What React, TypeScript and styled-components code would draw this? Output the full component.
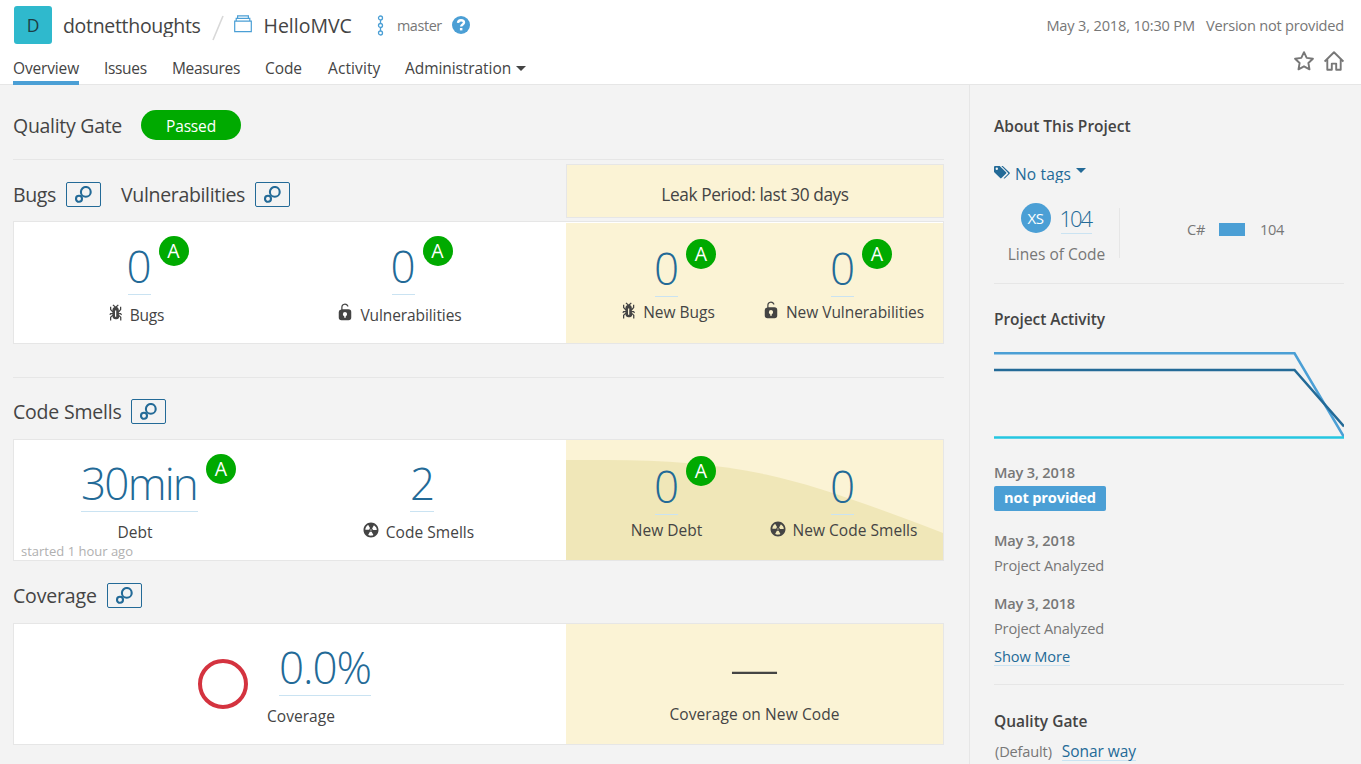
import React from "react";
import styled, { createGlobalStyle } from "styled-components";

const color = {
  text: "#444444",
  muted: "#777777",
  link: "#236a97",
  linkLine: "#cae3f2",
  blue: "#4b9fd5",
  green: "#00aa00",
  red: "#d4333f",
  page: "#f3f3f3",
  border: "#e6e6e6",
  leak: "#fbf3d5",
  leakWave: "#f0e7b8",
};

const GlobalStyle = createGlobalStyle`
  * { box-sizing: border-box; }
  body {
    margin: 0;
    height: 764px;
    overflow: hidden;
    background: ${color.page};
    color: ${color.text};
    font: 15.5px/24px "Open Sans", "Noto Sans", sans-serif;
    white-space: nowrap;
  }
  svg { display: block; flex: none; }
`;

const Tracked = styled.span<{ $ls?: number }>`
  letter-spacing: ${(p) => p.$ls ?? 0}px;
`;

/* ---------- header ---------- */

const Header = styled.header`
  height: 85px;
  background: #fff;
  border-bottom: 1px solid ${color.border};
  padding: 6px 17px 0 13px;
`;

const HeaderRow = styled.div`
  display: flex;
  align-items: center;
  height: 38px;
`;

const Avatar = styled.div`
  width: 38px;
  height: 38px;
  margin: 0 11px 0 1px;
  border-radius: 3px;
  background: #2fb9cd;
  color: #1d3d44;
  font-size: 17.5px;
  line-height: 38px;
  text-align: center;
`;

const Crumb = styled(Tracked)`
  height: 24px;
  overflow: hidden;
  font-size: 19.5px;
  line-height: 26px;
`;

const Slash = styled.svg`
  margin: 6px 10px 0 11px;
`;

const ProjectIcon = styled.svg`
  margin: -2px 12px 0 0;
`;

const BranchIcon = styled.svg`
  margin: 0 13px 0 25px;
`;

const Branch = styled(Tracked)`
  width: 45px;
  margin: 2px 10px 0 0;
  color: ${color.muted};
  font-size: 14.4px;
`;

const Meta = styled.div`
  display: flex;
  gap: 11px;
  margin-left: auto;
  color: ${color.muted};
  font-size: 14.6px;
`;

const NavRow = styled.nav`
  display: flex;
  height: 41px;
  gap: 25px;
  padding-top: 11px;
`;

const Tab = styled.a<{ $active?: boolean; $ls: number; $w: number }>`
  display: flex;
  width: ${(p) => p.$w}px;
  height: 30px;
  line-height: 26px;
  letter-spacing: ${(p) => p.$ls}px;
  border-bottom: 4px solid ${(p) => (p.$active ? color.blue : "transparent")};
`;

const Caret = styled.i<{ $color: string; $top: number; $left: number }>`
  width: 0;
  height: 0;
  margin: ${(p) => p.$top}px 0 0 ${(p) => p.$left}px;
  border: 5px solid transparent;
  border-top-color: ${(p) => p.$color};
  border-bottom: 0;
`;

const NavActions = styled.div`
  display: flex;
  gap: 10px;
  margin: -4px 0 0 auto;
`;

/* ---------- main column ---------- */

const Columns = styled.div`
  display: flex;
  height: 679px;
`;

const Main = styled.main`
  width: 969px;
  padding: 0 25px 0 13px;
`;

const GateRow = styled.section`
  display: flex;
  align-items: center;
  height: 75px;
  padding-top: 5px;
  border-bottom: 1px solid ${color.border};
`;

const Title = styled.h2<{ $w: number; $ls: number }>`
  width: ${(p) => p.$w}px;
  margin: 0;
  font-size: 19.5px;
  font-weight: 400;
  line-height: 26px;
  letter-spacing: ${(p) => p.$ls}px;
`;

const GateTitle = styled(Title)`
  margin-top: 2px;
`;

const Pill = styled.span`
  width: 100px;
  height: 30px;
  margin-left: 19px;
  border-radius: 15px;
  background: ${color.green};
  color: #fff;
  line-height: 32px;
  letter-spacing: -0.15px;
  text-align: center;
`;

const DomainHeader = styled.div<{ $height: number; $top?: number }>`
  display: flex;
  align-items: center;
  height: ${(p) => p.$height}px;
  padding-top: ${(p) => p.$top ?? 0}px;
`;

const DetailsButton = styled.button`
  display: flex;
  align-items: center;
  justify-content: center;
  width: 35px;
  height: 25px;
  margin: 0 20px 0 10px;
  padding: 0;
  border: 1px solid ${color.link};
  border-radius: 2px;
  background: transparent;
`;

const LeakLegend = styled.div`
  width: 378px;
  height: 54px;
  margin: 0 0 4px auto;
  align-self: flex-end;
  border: 1px solid ${color.border};
  background: ${color.leak};
  font-size: 17.3px;
  line-height: 60px;
  letter-spacing: -0.41px;
  text-align: center;
`;

const LegendHeader = styled.div`
  display: flex;
  align-items: center;
  height: 61px;
  > h2, > button { transform: translateY(4px); }
  > div { margin: 0 0 3px auto; }
`;

const Card = styled.section<{ $height: number }>`
  display: flex;
  height: ${(p) => p.$height}px;
  border: 1px solid ${color.border};
  background: #fff;
`;

const Measures = styled.div<{ $columns: string; $gap?: number }>`
  position: relative;
  display: grid;
  grid-template-columns: ${(p) => p.$columns};
  column-gap: ${(p) => p.$gap ?? 0}px;
  width: 552px;
`;

const LeakMeasures = styled.div<{ $columns: string; $top?: number }>`
  position: relative;
  display: grid;
  grid-template-columns: ${(p) => p.$columns};
  width: 377px;
  margin-top: ${(p) => p.$top ?? 0}px;
  background: ${color.leak};
`;

const Wave = styled.svg`
  position: absolute;
  left: 0;
  top: 0;
`;

const Cell = styled.div<{ $top: number }>`
  position: relative;
  display: flex;
  flex-direction: column;
  align-items: center;
  min-width: 0;
  padding-top: ${(p) => p.$top}px;
`;

const Value = styled.a<{ $ls: number; $w: number; $shift?: number; $indent?: number }>`
  position: relative;
  width: ${(p) => p.$w}px;
  height: 59px;
  margin-left: ${(p) => p.$shift ?? 0}px;
  border-bottom: 1px solid ${color.linkLine};
  color: ${color.link};
  font-size: 44px;
  font-weight: 300;
  line-height: 61px;
  letter-spacing: ${(p) => p.$ls}px;
  text-indent: ${(p) => p.$indent ?? 0}px;
`;

const Rating = styled.span<{ $top: number }>`
  position: absolute;
  left: calc(100% + 8px);
  top: ${(p) => p.$top}px;
  width: 30px;
  height: 30px;
  border-radius: 50%;
  background: ${color.green};
  color: #fff;
  font-size: 19.5px;
  font-weight: 400;
  line-height: 30px;
  letter-spacing: 0;
  text-align: center;
  text-indent: 0;
`;

const Label = styled.div<{ $top: number; $ls?: number; $icon?: number }>`
  display: flex;
  gap: 5px;
  margin-top: ${(p) => p.$top}px;
  letter-spacing: ${(p) => p.$ls ?? 0}px;
  svg { margin-top: ${(p) => p.$icon ?? 0}px; }
`;

const Started = styled.span`
  position: absolute;
  left: 7px;
  bottom: -1px;
  color: #b0b0b0;
  font-size: 13px;
  line-height: 20px;
`;

const Divider = styled.hr<{ $top: number }>`
  height: 1px;
  margin: ${(p) => p.$top}px 0 0;
  border: 0;
  background: ${color.border};
`;

const CoverageSummary = styled.div`
  display: flex;
  gap: 19px;
  width: 552px;
  padding: 13px 0 0 184px;
`;

const Ring = styled.div`
  width: 50px;
  height: 50px;
  margin-top: 22px;
  border: 4px solid ${color.red};
  border-radius: 50%;
`;

const Dash = styled.span`
  height: 58px;
  font-size: 49px;
  font-weight: 300;
  line-height: 54px;
`;

/* ---------- sidebar ---------- */

const Sidebar = styled.aside`
  width: 392px;
  padding: 0 17px 0 24px;
  border-left: 1px solid ${color.border};
  color: ${color.muted};
  font-size: 14.6px;
`;

const SideTitle = styled.h3<{ $top: number; $ls?: number }>`
  margin: ${(p) => p.$top}px 0 0;
  color: ${color.text};
  font-size: 15.5px;
  font-weight: 600;
  letter-spacing: ${(p) => p.$ls ?? 0}px;
`;

const Tags = styled.a`
  display: flex;
  height: 21px;
  margin-top: 24px;
  overflow: hidden;
  color: ${color.link};
  font-size: 15.5px;
  svg { margin: 1px 4px 0 0; }
`;

const SizeRow = styled.div`
  display: flex;
  height: 50px;
  margin-top: 25px;
`;

const Size = styled.div`
  display: flex;
  flex-direction: column;
  align-items: center;
  width: 125px;
  margin-top: -5px;
  font-size: 15.5px;
`;

const SizeTop = styled.div`
  display: flex;
  gap: 10px;
  height: 31px;
  margin-right: 1px;
`;

const SizeBadge = styled.span`
  width: 30px;
  height: 30px;
  border-radius: 50%;
  background: ${color.blue};
  color: #fff;
  font-size: 15px;
  line-height: 31px;
  letter-spacing: -0.4px;
  text-align: center;
`;

const SizeValue = styled.a`
  width: 31px;
  height: 31px;
  border-bottom: 1px solid ${color.linkLine};
  color: ${color.link};
  font-size: 22px;
  font-weight: 300;
  line-height: 31px;
  letter-spacing: -2.1px;
  text-indent: -1px;
`;

const SizeLabel = styled.span`
  margin-top: 8px;
`;

const Languages = styled.div`
  display: flex;
  align-items: center;
  height: 50px;
  padding: 0 0 8px 67px;
  border-left: 1px solid ${color.border};
  letter-spacing: -0.3px;
`;

const LanguageBar = styled.span`
  width: 26px;
  height: 13px;
  margin: 1px 15px 0 14px;
  background: ${color.blue};
`;

const Chart = styled.svg`
  margin-top: 20px;
`;

const ActivityDate = styled.div<{ $top: number }>`
  margin-top: ${(p) => p.$top}px;
  font-weight: 600;
  letter-spacing: -0.18px;
`;

const VersionBadge = styled.span`
  display: block;
  width: 112px;
  height: 25px;
  margin-top: 2px;
  border-radius: 2px;
  background: ${color.blue};
  color: #fff;
  font-weight: 700;
  line-height: 23px;
  letter-spacing: -0.13px;
  text-align: center;
`;

const ActivityText = styled.div`
  margin-top: 1px;
  letter-spacing: -0.17px;
`;

const Link = styled.a<{ $ls: number; $size?: number }>`
  display: block;
  width: fit-content;
  height: 21px;
  border-bottom: 1px solid ${color.linkLine};
  color: ${color.link};
  font-size: ${(p) => p.$size ?? 14.6}px;
  line-height: 22px;
  letter-spacing: ${(p) => p.$ls}px;
`;

const ShowMore = styled(Link)`
  margin-top: 5px;
`;

const GateName = styled.div`
  display: flex;
  gap: 10px;
  margin-top: 7px;
  padding-left: 1px;
  line-height: 22px;
  letter-spacing: -0.16px;
`;

/* ---------- icons ---------- */

const iconPaths = {
  bug: "M11 9h1.3l.5.8.8-.5-.8-1.3H11v-.3l2-2.3V3h-1v2l-1 1.2V5c-.1-.8-.7-1.5-1.4-1.9L11 1.8l-.7-.7-1.8 1.6-1.8-1.6-.7.7 1.5 1.3C6.7 3.5 6.1 4.2 6 5v1.1L5 5V3H4v2.3l2 2.3V8H4.2l-.7 1.2.8.5.4-.7H6v.3l-2 1.9V14h1v-2.4l1-1C6 12 7.1 13 8.4 13h.8c.7 0 1.4-.3 1.8-.9.3-.4.3-.9.2-1.4l.9.9V14h1v-2.8l-2-1.9V9zm-2 2H8V6h1v5z",
  lock: "M10.8 5H6V3.9a2.28 2.28 0 0 1 2-2.5 2.22 2.22 0 0 1 1.8 1.2.48.48 0 0 0 .7.2.48.48 0 0 0 .2-.7A3 3 0 0 0 8 .4a3.34 3.34 0 0 0-3 3.5v1.2a2.16 2.16 0 0 0-2 2.1v4.4a2.22 2.22 0 0 0 2.2 2.2h5.6a2.22 2.22 0 0 0 2.2-2.2V7.2A2.22 2.22 0 0 0 10.8 5zm-2.2 5.5v1.2H7.4v-1.2a1.66 1.66 0 0 1-1.1-1.6A1.75 1.75 0 0 1 8 7.2a1.71 1.71 0 0 1 .6 3.3z",
  smell:
    "M8 2C4.7 2 2 4.7 2 8s2.7 6 6 6 6-2.7 6-6-2.7-6-6-6zm-.5 5.5h.9v.9h-.9v-.9zm-3.8.2c-.1 0-.2-.1-.2-.2 0-.4.1-1.2.6-2S5.3 4.2 5.6 4c.2 0 .3 0 .3.1l1.3 2.3c0 .1 0 .2-.1.2-.1.2-.2.3-.3.5-.1.2-.2.4-.2.5 0 .1-.1.2-.2.2l-2.7-.1zM9.9 12c-.3.2-1.1.5-2 .5-.9 0-1.7-.3-2-.5-.1 0-.1-.2-.1-.3l1.3-2.3c0-.1.1-.1.2-.1.2.1.3.1.5.1s.4 0 .5-.1c.1 0 .2 0 .2.1l1.3 2.3c.2.2.2.3.1.3zm2.5-4.1L9.7 8c-.1 0-.2-.1-.2-.2 0-.2-.1-.4-.2-.5 0-.1-.2-.3-.3-.4-.1 0-.1-.1-.1-.2l1.3-2.3c.1-.1.2-.1.3-.1.3.2 1 .7 1.5 1.5s.6 1.6.6 2c0 0-.1.1-.2.1z",
};

const MetricIcon = ({ name }: { name: keyof typeof iconPaths }) => (
  <svg width="20" height="20" viewBox="0 0 16 16" fill={color.text}>
    <path d={iconPaths[name]} />
  </svg>
);

const Details = () => (
  <DetailsButton>
    <svg width="17" height="17" viewBox="0 0 17 17" fill="none" stroke={color.link} strokeWidth="2.1">
      <circle cx="10.8" cy="5.9" r="4.9" />
      <circle cx="4" cy="12.800" r="3" />
    </svg>
  </DetailsButton>
);

/* ---------- composed parts ---------- */

type MeasureProps = {
  value: string;
  width: number;
  ls: number;
  label: string;
  labelLs?: number;
  icon?: keyof typeof iconPaths;
  rated?: boolean;
  ratingTop?: number;
  top: number;
  leak?: boolean;
  children?: React.ReactNode;
};

const Measure = ({ value, width, ls, label, labelLs, icon, rated, ratingTop = 0, top, leak, children }: MeasureProps) => (
  <Cell $top={top}>
    <Value $ls={ls} $w={width} $shift={leak ? 0 : 9} $indent={value === "0" ? -1 : 0}>
      {value}
      {rated && <Rating $top={ratingTop}>A</Rating>}
    </Value>
    <Label $top={leak ? 3 : 8} $ls={labelLs} $icon={leak ? 1 : 0}>
      {icon && <MetricIcon name={icon} />}
      {label}
    </Label>
    {children}
  </Cell>
);

export default function App() {
  return (
    <>
      <GlobalStyle />
      <Header>
        <HeaderRow>
          <Avatar>D</Avatar>
          <Crumb $ls={-0.31}>dotnetthoughts</Crumb>
          <Slash width="12" height="26" viewBox="0 0 12 26" stroke="#d8d8d8" strokeWidth="1.6">
            <path d="M1 25L11 1" />
          </Slash>
          <ProjectIcon width="18" height="18" viewBox="0 0 18 18" fill="none" stroke={color.blue} strokeWidth="1.2">
            <path d="M.7 6.2h16.6v10.4H.7zM2.2 6V3.4h13.6V6M3.6 3.2V.8h10.8v2.4" />
          </ProjectIcon>
          <Crumb $ls={0}>HelloMVC</Crumb>
          <BranchIcon width="7" height="21" viewBox="0 0 7 21" fill="none" stroke={color.blue} strokeWidth="1.3">
            <circle cx="3.5" cy="3" r="2" />
            <circle cx="3.5" cy="10.5" r="2" />
            <circle cx="3.5" cy="18" r="2" />
            <path d="M3.5 5v3.500M3.500 12.500v3.500" />
          </BranchIcon>
          <Branch $ls={-0.39}>master</Branch>
          <svg width="18" height="18" viewBox="0 0 18 18" fill="none">
            <circle cx="9" cy="9" r="9" fill={color.blue} />
            <path d="M6 6.900C6.100 5.100 7.300 4.200 9 4.200c1.800 0 3 1 3 2.400 0 2-2.800 1.900-2.800 4" stroke="#fff" strokeWidth="2.400" />
            <path d="M7.900 12h2.500v2.400H7.900z" fill="#fff" />
          </svg>
          <Meta>
            <Tracked $ls={-0.17}>May 3, 2018, 10:30 PM</Tracked>
            <Tracked $ls={-0.22}>Version not provided</Tracked>
          </Meta>
        </HeaderRow>
        <NavRow>
          <Tab $active $w={66} $ls={-0.15}>Overview</Tab>
          <Tab $w={43} $ls={-0.33}>Issues</Tab>
          <Tab $w={68} $ls={-0.33}>Measures</Tab>
          <Tab $w={38} $ls={-0.08}>Code</Tab>
          <Tab $w={52} $ls={0.1}>Activity</Tab>
          <Tab $w={120} $ls={-0.07}>
            Administration
            <Caret $color={color.text} $top={11} $left={5} />
          </Tab>
          <NavActions>
            <svg width="20" height="20" viewBox="0 0 20 20" fill="none" stroke={color.muted} strokeWidth="1.9" strokeLinejoin="round">
              <path d="M10 1.200l2.700 5.700 6.200.8-4.500 4.300 1.100 6.300-5.500-3-5.500 3 1.100-6.300L1.100 7.700l6.200-.8z" />
            </svg>
            <svg width="20" height="20" viewBox="0 0 20 20" fill="none" stroke={color.muted} strokeWidth="1.900" strokeLinejoin="round">
              <path d="M.6 10.600L10 1.300l9.400 9.300M3.300 8.600v10.200h4.500v-6.200h4.400v6.200h4.500V8.600" />
            </svg>
          </NavActions>
        </NavRow>
      </Header>

      <Columns>
        <Main>
          <GateRow>
            <GateTitle $w={109} $ls={-0.29}>Quality Gate</GateTitle>
            <Pill>Passed</Pill>
          </GateRow>

          <LegendHeader>
            <Title $w={43} $ls={-0.36}>Bugs</Title>
            <Details />
            <Title $w={124} $ls={-0.33}>Vulnerabilities</Title>
            <Details />
            <LeakLegend>Leak Period: last 30 days</LeakLegend>
          </LegendHeader>
          <Card $height={123}>
            <Measures $columns="241px 287px">
              <Measure top={14} value="0" width={23} ls={-2} icon="bug" label="Bugs" labelLs={-0.2} rated />
              <Measure top={14} value="0" width={23} ls={-2} icon="lock" label="Vulnerabilities" labelLs={-0.1} rated />
            </Measures>
            <LeakMeasures $columns="201px 151px" $top={1}>
              <Measure leak top={15} value="0" width={23} ls={-2} icon="bug" label="New Bugs" rated ratingTop={1} />
              <Measure leak top={15} value="0" width={23} ls={-2} icon="lock" label="New Vulnerabilities" labelLs={-0.05} rated ratingTop={1} />
            </LeakMeasures>
          </Card>
          <Divider $top={33} />

          <DomainHeader $height={61} $top={6}>
            <Title $w={108} $ls={-0.2}>Code Smells</Title>
            <Details />
          </DomainHeader>
          <Card $height={122}>
            <Measures $columns="242px 297px" $gap={13}>
              <Measure top={13} value="30min" width={117} ls={-1.8} label="Debt" rated ratingTop={1}>
                <Started>started 1 hour ago</Started>
              </Measure>
              <Measure top={13} value="2" width={24} ls={-1} icon="smell" label="Code Smells" labelLs={0.03} />
            </Measures>
            <LeakMeasures $columns="201px 151px">
              <Wave width="377" height="120" viewBox="0 0 377 120" fill={color.leakWave}>
                <path d="M0 20H40C100 20 150 24 200 34.500S320 71 377 93V120H0z" />
              </Wave>
              <Measure leak top={16} value="0" width={23} ls={-2} label="New Debt" rated />
              <Measure leak top={16} value="0" width={23} ls={-2} icon="smell" label="New Code Smells" labelLs={0.03} />
            </LeakMeasures>
          </Card>

          <DomainHeader $height={62} $top={7}>
            <Title $w={84} $ls={-0.16}>Coverage</Title>
            <Details />
          </DomainHeader>
          <Card $height={122}>
            <CoverageSummary>
              <Ring />
              <div>
                <Value as="div" $w={92} $shift={12} $ls={-1.05}>0.0%</Value>
                <Label $top={8} $ls={0.05}>Coverage</Label>
              </div>
            </CoverageSummary>
            <LeakMeasures $columns="377px">
              <Cell $top={16}>
                <Dash>—</Dash>
                <Label $top={4} $ls={0.1}>Coverage on New Code</Label>
              </Cell>
            </LeakMeasures>
          </Card>
        </Main>

        <Sidebar>
          <SideTitle $top={29}>About This Project</SideTitle>
          <Tags>
            <svg width="17" height="17" viewBox="0 0 17 17" fill={color.link}>
              <path fillRule="evenodd" d="M0 4.500V9l6.200 6.100c.4.400.9.400 1.300 0l4.600-4.500c.4-.4.400-.9 0-1.300L5.700 3H1C.4 3 0 3.500 0 4.500zM2.800 4.500a1.200 1.200 0 1 1 0 2.400 1.200 1.200 0 0 1 0-2.400z" />
              <path d="M7.300 3h1.500l6.800 6.400c.4.400.4.900 0 1.300L11 15.200c-.5.500-.9.400-1.400 0l4.300-4.100c.5-.5.500-1 0-1.400z" />
            </svg>
            <Tracked $ls={0.15}>No tags</Tracked>
            <Caret $color={color.link} $top={6} $left={5} />
          </Tags>
          <SizeRow>
            <Size>
              <SizeTop>
                <SizeBadge>XS</SizeBadge>
                <SizeValue>104</SizeValue>
              </SizeTop>
              <SizeLabel>Lines of Code</SizeLabel>
            </Size>
            <Languages>
              C#
              <LanguageBar />
              104
            </Languages>
          </SizeRow>
          <Divider $top={25} />

          <SideTitle $top={23} $ls={-0.07}>Project Activity</SideTitle>
          <Chart width="350" height="90" viewBox="0 0 350 90" fill="none" strokeWidth="2.5">
            <path d="M0 2.300H300.500L350 86" stroke={color.blue} />
            <path d="M0 19H300.500L350 75.500" stroke={color.link} />
            <path d="M0 86.500H350" stroke="#24c6e0" />
          </Chart>
          <ActivityDate $top={19}>May 3, 2018</ActivityDate>
          <VersionBadge>not provided</VersionBadge>
          <ActivityDate $top={17}>May 3, 2018</ActivityDate>
          <ActivityText>Project Analyzed</ActivityText>
          <ActivityDate $top={14}>May 3, 2018</ActivityDate>
          <ActivityText>Project Analyzed</ActivityText>
          <ShowMore $ls={-0.1}>Show More</ShowMore>
          <Divider $top={18} />

          <SideTitle $top={24}>Quality Gate</SideTitle>
          <GateName>
            (Default)
            <Link $ls={-0.07} $size={15.5}>Sonar way</Link>
          </GateName>
        </Sidebar>
      </Columns>
    </>
  );
}
